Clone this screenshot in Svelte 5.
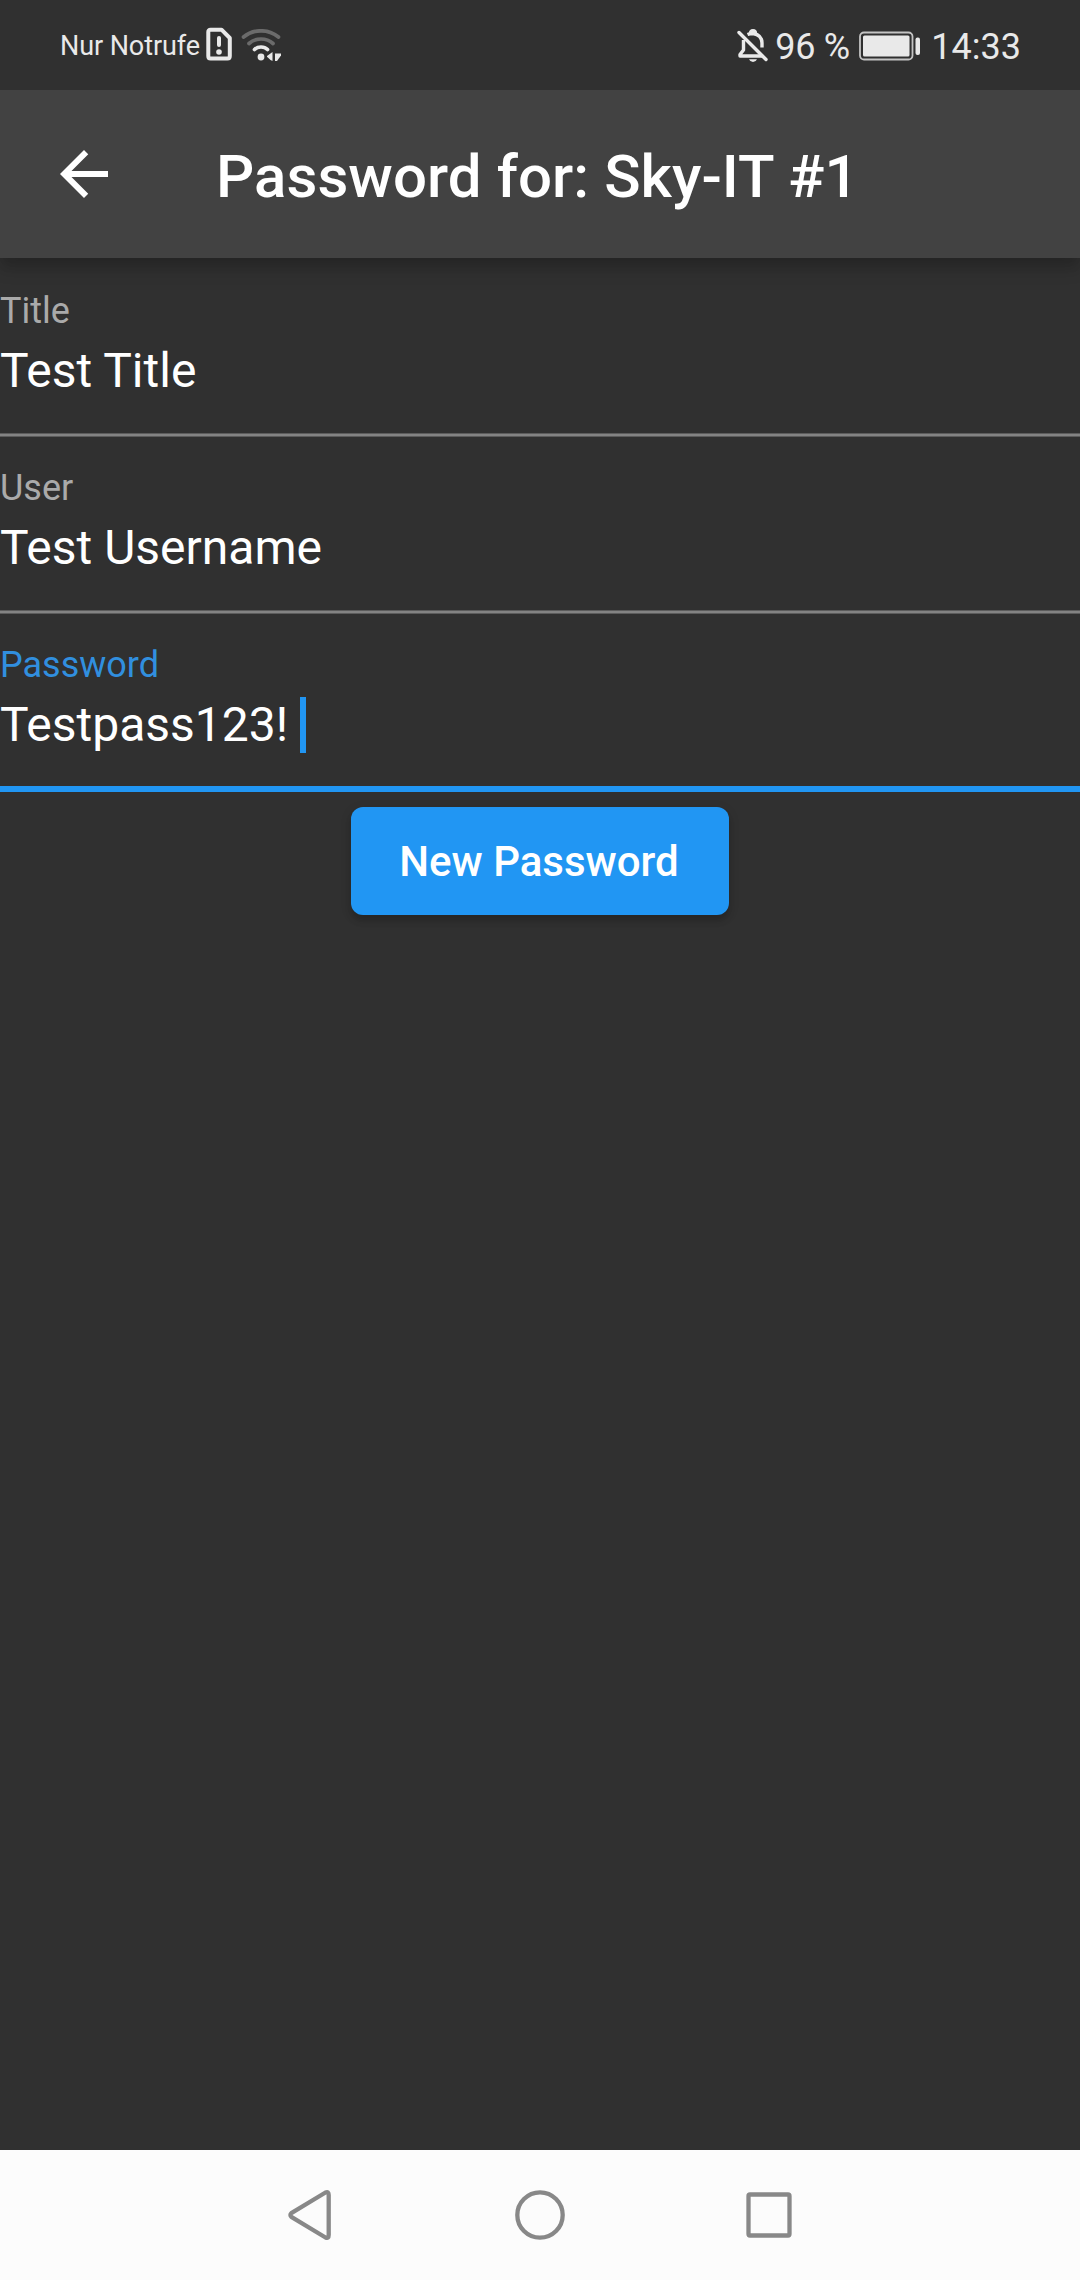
<script>
  const fields = [
    { label: 'Title', value: 'Test Title', focused: false },
    { label: 'User', value: 'Test Username', focused: false },
    { label: 'Password', value: 'Testpass123! ', focused: true }
  ];
</script>

<div class="screen">
  <div class="status">
    <div class="side">
      <span class="carrier">Nur Notrufe</span>
      <svg class="sim" width="26" height="34" viewBox="0 0 26 34">
        <path d="M4.5 2.700H15.500L23.800 11V29Q23.800 31.500 21.500 31.500H4.500Q2.300 31.500 2.300 29V5Q2.300 2.700 4.500 2.700Z" fill="none" stroke="#e9e9e9" stroke-width="4" stroke-linejoin="round" />
        <path d="M13 11V18" stroke="#e9e9e9" stroke-width="4" stroke-linecap="round" />
        <circle cx="13" cy="25" r="2.800" fill="#e9e9e9" />
      </svg>
      <svg class="wifi" width="40" height="34" viewBox="0 0 40 34">
        <g fill="none" stroke-width="3.700" stroke-linecap="round">
          <path d="M2.500 8Q10 1.800 20 1.800T37.500 8" stroke="#6b6b6b" />
          <path d="M8 14.500Q13 10 20 10T32 14.500" stroke="#6b6b6b" />
          <path d="M13.500 20.500Q16 18 20 18T26.500 20.500" stroke="#e9e9e9" />
        </g>
        <circle cx="20" cy="28" r="3.400" fill="#e9e9e9" />
        <path d="M31.500 23V32L29.500 31L26 27.800V27Z" fill="#e9e9e9" />
        <path d="M34 24.500H40V26.500L36 32H34Z" fill="#e9e9e9" />
      </svg>
    </div>
    <div class="side">
      <svg class="bell" width="32" height="36" viewBox="0 0 32 36">
        <g fill="none" stroke="#e9e9e9" stroke-width="3.400">
          <path d="M6.500 12V22L3 26.500V28H25" stroke-linejoin="round" />
          <path d="M10.500 6.500Q13 5.500 16 5.500Q25 7 25 15V19.500" />
          <path d="M13.500 5.500Q13.500 2.700 16 2.700T18.500 5.500" />
          <path d="M2 4.500L29 31.500" stroke-linecap="round" />
        </g>
        <path d="M12 31.300H20Q19 34 16 34T12 31.300Z" fill="#e9e9e9" />
      </svg>
      <span class="percent">96 %</span>
      <svg class="battery" width="62" height="30" viewBox="0 0 62 30">
        <rect x="1" y="1.500" width="52.500" height="27" rx="4" fill="none" stroke="#c4c4c4" stroke-width="1.800" />
        <rect x="4" y="4.500" width="46.500" height="21" rx="1.500" fill="#e9e9e9" />
        <rect x="56.500" y="6.500" width="4.500" height="17.500" rx="2" fill="#e9e9e9" />
      </svg>
      <span class="time">14:33</span>
    </div>
  </div>

  <header>
    <svg class="back" width="72" height="72" viewBox="0 0 24 24">
      <path d="M20 11H7.830l5.590-5.590L12 4l-8 8 8 8 1.410-1.410L7.830 13H20v-2z" fill="#fff" />
    </svg>
    <h1>Password for: Sky-IT #1</h1>
  </header>

  <main>
    {#each fields as field}
      <div class="field" class:focused={field.focused}>
        <span class="label">{field.label}</span>
        <div class="value">
          <span>{field.value}</span>
          {#if field.focused}<i class="caret"></i>{/if}
        </div>
        <div class="underline"></div>
      </div>
    {/each}
    <button>New Password</button>
  </main>

  <nav>
    <svg width="56" height="56" viewBox="0 0 56 56">
      <path d="M42.500 5.500Q45.700 4 45.700 8V48Q45.700 52 42.500 50.500L8.300 29.800Q6.500 28 8.300 26.200Z" />
    </svg>
    <svg width="56" height="56" viewBox="0 0 56 56">
      <circle cx="28" cy="28" r="22.700" />
    </svg>
    <svg width="56" height="56" viewBox="0 0 56 56">
      <rect x="7.500" y="7.500" width="41" height="41" rx="1.500" />
    </svg>
  </nav>
</div>

<style>
  :global(body) {
    margin: 0;
    background: #303030;
  }
  .screen {
    display: flex;
    flex-direction: column;
    height: 2280px;
    overflow: hidden;
    background: #303030;
    color: #fff;
    font-family: Roboto, sans-serif;
  }
  .status {
    position: relative;
    z-index: 1;
    display: flex;
    justify-content: space-between;
    flex: none;
    box-sizing: border-box;
    height: 90px;
    padding: 0 59px 0 60px;
    background: #303030;
    color: #e9e9e9;
  }
  .side {
    display: flex;
    align-items: flex-start;
  }
  .carrier {
    margin-top: 29px;
    font-size: 27px;
    line-height: 34px;
    letter-spacing: -0.08px;
  }
  .sim {
    margin: 27px 0 0 6px;
  }
  .wifi {
    margin: 29px 0 0 9px;
  }
  .bell {
    margin: 28px 0 0;
  }
  .percent {
    margin: 26px 0 0 6px;
    font-size: 36px;
    line-height: 42px;
    letter-spacing: -0.3px;
    white-space: pre;
  }
  .battery {
    margin: 30.500px 0 0 9.500px;
  }
  .time {
    margin: 26px 0 0 10px;
    font-size: 36px;
    line-height: 42px;
  }
  header {
    position: relative;
    display: flex;
    align-items: center;
    flex: none;
    height: 168px;
    padding-left: 48px;
    background: #424242;
    box-shadow:
      0 6px 12px -3px rgba(0, 0, 0, 0.14),
      0 12px 15px 0 rgba(0, 0, 0, 0.14);
  }
  h1 {
    margin: 5px 0 0 96px;
    font-size: 60px;
    font-weight: 500;
    line-height: 70px;
    letter-spacing: 0.07px;
  }
  main {
    display: flex;
    flex: 1;
    flex-direction: column;
    padding-top: 2px;
  }
  .field {
    display: flex;
    flex-direction: column;
    box-sizing: border-box;
    height: 177px;
    padding-top: 30px;
  }
  .field.focused {
    height: 178px;
  }
  .label {
    font-size: 36px;
    line-height: 42px;
    color: #aaa;
  }
  .focused .label {
    color: #318fdf;
  }
  .value {
    display: flex;
    height: 56px;
    margin-top: 11px;
    font-size: 48px;
    line-height: 56px;
    white-space: pre;
  }
  .caret {
    width: 6px;
    height: 56px;
    background: #2196f3;
  }
  .underline {
    height: 4px;
    margin-top: auto;
    background: linear-gradient(#5c5c5c 25%, #838383 25% 75%, #5c5c5c 75%);
  }
  .focused .underline {
    height: 6px;
    background: #2196f3;
  }
  button {
    align-self: center;
    box-sizing: border-box;
    width: 378px;
    height: 108px;
    margin-top: 15px;
    padding: 2px 2px 0 0;
    border: 0;
    border-radius: 12px;
    background: #2196f3;
    color: #fff;
    font: 500 42px/50px Roboto, sans-serif;
    box-shadow:
      0 6px 6px 0 rgba(0, 0, 0, 0.14),
      0 3px 12px 0 rgba(0, 0, 0, 0.12);
  }
  nav {
    display: flex;
    justify-content: center;
    align-items: center;
    flex: none;
    gap: 173px;
    height: 130px;
    background: #fcfcfc;
  }
  nav svg {
    fill: none;
    stroke: #888;
    stroke-width: 4.300px;
    stroke-linejoin: round;
  }
</style>
